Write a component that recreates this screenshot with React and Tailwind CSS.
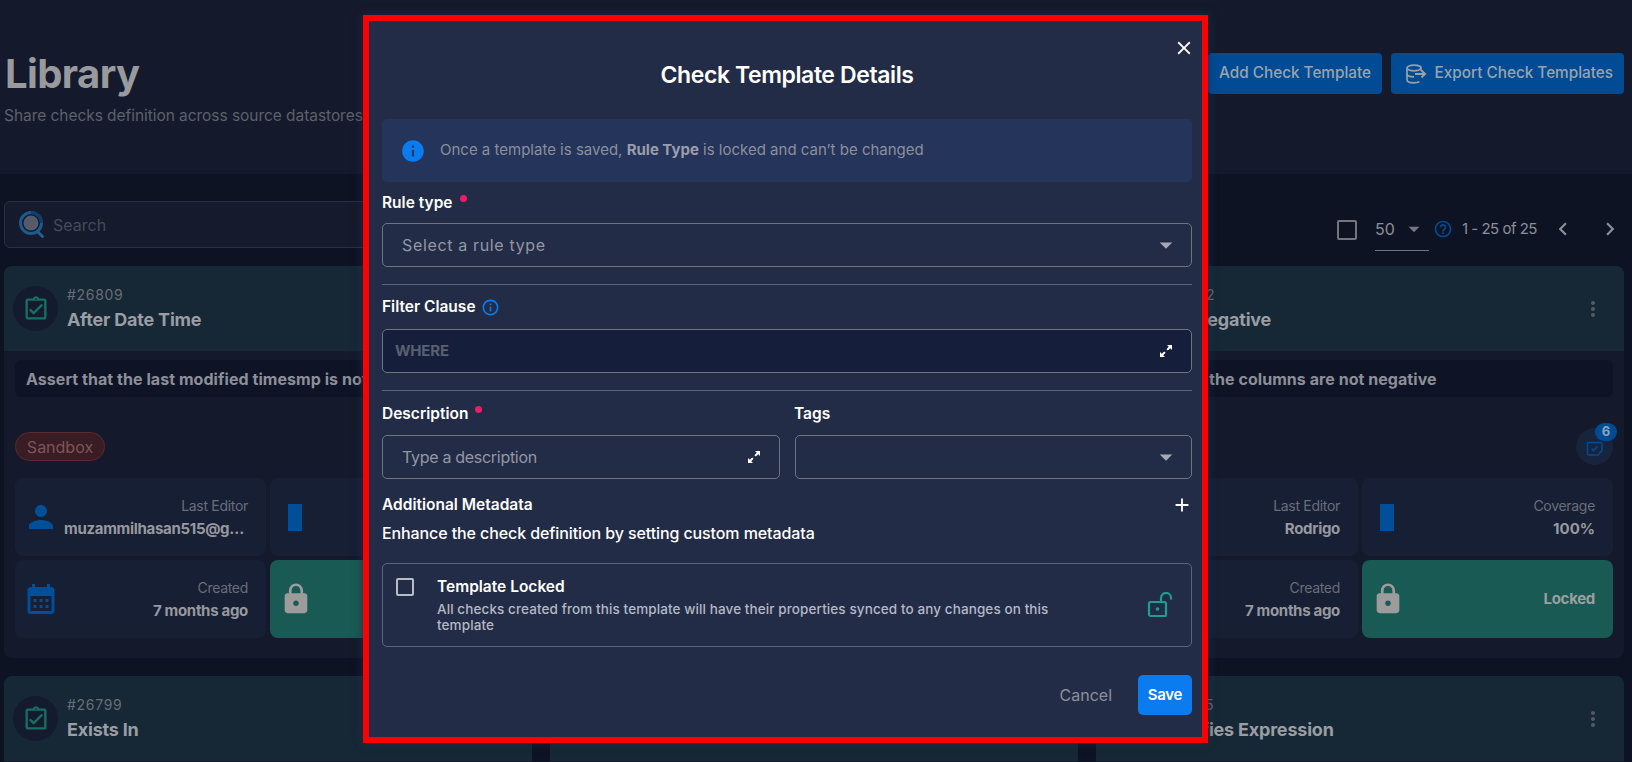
import React from "react";
import {
  MdInfo, MdInfoOutline, MdClose, MdAdd, MdArrowDropDown, MdPerson, MdCalendarMonth, MdLock,
  MdChevronLeft, MdChevronRight, MdMoreVert, MdHelpOutline, MdOutlineAssignmentTurnedIn,
} from "react-icons/md";

const Expand = () => (
  <svg width="14" height="14" viewBox="0 0 14 14" fill="#fff">
    <path d="M8 1h5v5l-1.8-1.8-2.4 2.4-1.4-1.4 2.4-2.4z" />
    <path d="M6 13H1V8l1.8 1.8 2.4-2.4 1.4 1.4-2.4 2.4z" />
  </svg>
);

const Unlock = () => (
  <svg width="26" height="26" viewBox="0 0 26 26" fill="none" stroke="#1f9d8e" strokeWidth="2.2">
    <rect x="2" y="10" width="17" height="14" rx="1.5" />
    <circle cx="10.5" cy="17" r="1.8" fill="#1f9d8e" stroke="none" />
    <path d="M14 10V6a5 5 0 0 1 10 0v1.5" />
  </svg>
);

const ExportIcon = () => (
  <svg width="22" height="20" viewBox="0 0 22 20" fill="none" stroke="#9a9fa8" strokeWidth="1.7">
    <ellipse cx="9" cy="4" rx="7" ry="2.8" />
    <path d="M2 4v12c0 1.6 3.1 2.8 7 2.8 2.2 0 4.2-.4 5.500-1M16 4v3" />
    <path d="M2 10c0 1.600 3.100 2.800 7 2.800" />
    <path d="M10 10h10M16.500 6.500 20 10l-3.500 3.500" strokeWidth="2" />
  </svg>
);

const SearchIcon = () => (
  <svg width="26" height="28" viewBox="0 0 26 28" fill="none">
    <circle cx="12" cy="12" r="10.500" stroke="#1b5a8c" strokeWidth="3" />
    <path d="M12 1.500a10.500 10.500 0 0 1 10.500 10.500" stroke="#0d3f6e" strokeWidth="3" />
    <circle cx="12" cy="12" r="7.500" fill="#555b6b" />
    <path d="M19 21l4.500 4.500" stroke="#245f8c" strokeWidth="3" strokeLinecap="round" />
  </svg>
);

const TaskIcon = () => (
  <svg width="18" height="18" viewBox="0 0 18 18" fill="none" stroke="#004b93" strokeWidth="1.6">
    <path d="M3 4.500h11.500a1.500 1.500 0 0 1 1.500 1.500v6.500L12 17H3a1.500 1.500 0 0 1-1.500-1.500V6A1.500 1.500 0 0 1 3 4.500z" />
    <path d="M5.500 10.500l2 2 4-4" />
  </svg>
);

function Stat({ icon, label, value }) {
  return (
    <div className="h-[78px] rounded-lg bg-[#171f35] flex items-center justify-between pl-[8px] pr-[18px] min-w-0">
      <div className="shrink-0 flex items-center">{icon}</div>
      <div className="text-right min-w-0 ml-[4px]">
        <div className="text-[14px] leading-[20px] text-[#696e78] tracking-[-0.3px]">{label}</div>
        <div className="text-[15px] leading-[20px] mt-[3px] font-bold text-[#98999e] truncate max-w-[184px] tracking-[-0.3px]">{value}</div>
      </div>
    </div>
  );
}

function Card({ id, title, desc, tag, badge, editor }) {
  return (
    <div className="rounded-lg overflow-hidden bg-[#141a2c] h-[392px]">
      <div className="h-[85px] bg-[#162835] flex items-center pl-[9px] pr-[19px]">
        <div className="w-[45px] h-[45px] rounded-full bg-[#141b2e] flex items-center justify-center shrink-0">
          <MdOutlineAssignmentTurnedIn size={28} color="#167060" />
        </div>
        <div className="ml-[9px] flex-1 min-w-0">
          <div className="text-[14px] leading-[20px] h-[20px] text-[#686d75] tracking-[0.7px]">{id}</div>
          <div className="text-[18px] leading-[26px] h-[26px] mt-[2px] font-bold text-[#9a9da3] tracking-[-0.2px]">{title}</div>
        </div>
        <MdMoreVert size={24} color="#565a5f" />
      </div>
      <div className="px-[11px]">
        <div className="mt-[9px] h-[37px] rounded-md bg-[#0e1426] px-[11px] flex items-center text-[16px] font-bold text-[#8c8f97] whitespace-nowrap overflow-hidden tracking-[0.05px]">
          {desc}
        </div>
        <div className="relative mt-[35px] h-[29px] flex items-center">
          {tag && (
            <span className="h-[29px] w-[90px] rounded-full bg-[#3a1c24] border border-[#5a2a2f] text-[#7d5558] text-[16px] flex items-center justify-center">
              {tag}
            </span>
          )}
          {badge && (
            <div className="absolute right-[0px] top-[-4px] w-[37px] h-[37px] rounded-full bg-[#18233c] flex items-center justify-center">
              <TaskIcon />
              <span className="absolute right-[-4px] top-[-5px] w-[22px] h-[18px] rounded-full bg-[#004b93] text-[#8aa3bd] text-[13px] font-bold flex items-center justify-center">
                {badge}
              </span>
            </div>
          )}
        </div>
        <div className="mt-[17px] grid grid-cols-2 gap-[4px]">
          <Stat icon={<MdPerson size={36} color="#004f98" />} label="Last Editor" value={editor} />
          <div className="h-[78px] rounded-lg bg-[#171f35] flex items-center justify-between pl-[18px] pr-[18px]">
            <div className="w-[14px] h-[27px] bg-[#004f98]" />
            <div className="text-right">
              <div className="text-[14px] leading-[20px] text-[#696e78] tracking-[-0.3px]">Coverage</div>
              <div className="text-[15px] leading-[20px] mt-[3px] font-bold text-[#98999e]">100%</div>
            </div>
          </div>
          <Stat icon={<MdCalendarMonth size={36} color="#004f98" />} label="Created" value="7 months ago" />
          <div className="h-[78px] rounded-lg bg-[#195a54] flex items-center justify-between pl-[9px] pr-[18px]">
            <MdLock size={34} color="#9c9c9c" />
            <div className="text-[15px] font-bold text-[#9c9f9f] tracking-[-0.3px]">Locked</div>
          </div>
        </div>
      </div>
    </div>
  );
}

const Label = ({ children, dot, className = "" }) => (
  <div className={`h-[20px] leading-[20px] text-[15.5px] font-semibold text-white flex items-start ${className}`}>
    {children}
    {dot && <span className="ml-[7px] mt-[2px] w-[7px] h-[7px] rounded-full bg-[#e91e63]" />}
  </div>
);

const Field = ({ children, className = "" }) => (
  <div className={`h-[44px] rounded-[5px] border border-[#6f7480] flex items-center justify-between ${className}`}>
    {children}
  </div>
);

function Modal() {
  return (
    <div className="absolute left-[363px] top-[15px] w-[845px] h-[728px] border-[6px] border-[#ff0000] bg-[#232c47] pl-[13px] pr-[10px] shadow-[0_0_8px_rgba(35,44,71,0.8)]">
      <button className="absolute right-[7px] top-[16px] text-white">
        <MdClose size={22} />
      </button>
      <h2 className="mt-[39px] text-center text-[23px] leading-[30px] font-semibold text-white tracking-[-0.4px]">
        Check Template Details
      </h2>
      <div className="mt-[29px] h-[63px] rounded-[5px] bg-[#24345a] flex items-center pl-[18px] text-[15px] text-[#8b909c]">
        <MdInfo size={26} color="#0a7cf0" className="shrink-0" />
        <span className="ml-[14px]">
          Once a template is saved, <b className="font-bold text-[#9a9eaa]">Rule Type</b> is locked and can’t be changed
        </span>
      </div>
      <Label dot className="mt-[11px]">Rule type</Label>
      <Field className="mt-[10px] pl-[19px] pr-[10px]">
        <span className="text-[16px] text-[#9297a3] tracking-[0.65px]">Select a rule type</span>
        <MdArrowDropDown size={30} color="#a6a9b3" />
      </Field>
      <div className="mt-[17px] h-px bg-[#5f6472]" />
      <Label className="mt-[12px]">
        Filter Clause
        <MdInfoOutline size={19} color="#0a7cf0" className="ml-[5px] mt-[1px]" />
      </Label>
      <Field className="mt-[12px] bg-[#151e3a] pl-[12px] pr-[18px]">
        <span className="text-[15px] font-bold text-[#59606f] tracking-[-0.2px]">WHERE</span>
        <Expand />
      </Field>
      <div className="mt-[17px] h-px bg-[#5f6472]" />
      <div className="mt-[13px] grid grid-cols-[398px_1fr] gap-x-[15px]">
        <Label dot>Description</Label>
        <Label className="ml-[-1px]">Tags</Label>
        <Field className="mt-[11px] pl-[19px] pr-[18px]">
          <span className="text-[16px] text-[#9297a3] tracking-[-0.3px]">Type a description</span>
          <Expand />
        </Field>
        <Field className="mt-[11px] justify-end pr-[10px]">
          <MdArrowDropDown size={30} color="#a6a9b3" />
        </Field>
      </div>
      <div className="mt-[16px] flex items-center justify-between h-[20px]">
        <Label>Additional Metadata</Label>
        <MdAdd size={22} color="#fff" className="mr-[-1px]" />
      </div>
      <div className="mt-[8px] h-[20px] leading-[20px] text-[16px] font-medium text-white tracking-[-0.1px]">
        Enhance the check definition by setting custom metadata
      </div>
      <div className="mt-[20px] h-[84px] rounded-[5px] border border-[#5b6478] flex items-start pl-[13px] pr-[18px]">
        <div className="mt-[14px] w-[18px] h-[18px] rounded-[2px] border-2 border-[#b9bcc6] shrink-0" />
        <div className="ml-[23px] mt-[13px] flex-1">
          <div className="text-[15.5px] leading-[20px] font-semibold text-white">Template Locked</div>
          <div className="mt-[4px] text-[13.5px] leading-[16px] text-[#b4b9c4] w-[620px] font-medium tracking-[0.1px]">
            All checks created from this template will have their properties synced to any changes on this template
          </div>
        </div>
        <div className="mt-[28px] shrink-0">
          <Unlock />
        </div>
      </div>
      <div className="mt-[28px] flex items-center justify-end">
        <span className="text-[16px] text-[#8b8f9b] mr-[26px]">Cancel</span>
        <button className="w-[54px] h-[40px] rounded-[5px] bg-[#0a7cf0] text-white text-[15px] font-semibold tracking-[-0.3px]">Save</button>
      </div>
    </div>
  );
}

export default function App() {
  return (
    <div className="relative h-[762px] w-[1632px] overflow-hidden bg-[#0e1324] font-[Inter,sans-serif]">
      <header className="h-[174px] bg-[#141a2b] flex justify-between pl-[4px] pr-[8px]">
        <div className="pt-[48px]">
          <h1 className="text-[40px] leading-[52px] font-bold text-[#999a9e] ml-[1px] tracking-[-0.6px]">Library</h1>
          <p className="mt-[6px] text-[15.5px] leading-[20px] text-[#5c616c] tracking-[-0.05px]">Share checks definition across source datastores</p>
        </div>
        <div className="pt-[53px] flex items-start gap-[9px]">
          <button className="h-[41px] px-[11px] rounded bg-[#004b93] text-[#9aa3af] text-[15.3px] font-medium">Add Check Template</button>
          <button className="h-[41px] w-[233px] pl-[14px] pr-[11px] rounded bg-[#004b93] text-[#9aa3af] text-[15.3px] font-medium flex items-center justify-between">
            <ExportIcon />
            <span>Export Check Templates</span>
          </button>
        </div>
      </header>
      <div className="h-[74px] pl-[4px] pr-[8px] pt-[27px] flex justify-between items-start">
        <div className="h-[47px] w-[800px] rounded-md border border-[#2a3040] bg-[#151a2c] flex items-center pl-[14px]">
          <SearchIcon />
          <span className="ml-[8px] text-[16px] text-[#454b58]">Search</span>
        </div>
        <div className="flex items-center pt-[8px] pr-[1px] text-[#8b8f98]">
          <div className="w-[20px] h-[20px] border-2 border-[#74767c] rounded-[2px]" />
          <div className="ml-[18px] w-[54px] h-[42px] border-b border-[#74767c] flex items-start justify-between pt-[10px]">
            <span className="text-[16px] leading-[20px]">50</span>
            <MdArrowDropDown size={26} color="#74767c" className="mt-[-3px] mr-[2px]" />
          </div>
          <MdHelpOutline size={20} color="#004b93" className="ml-[4px] mt-[-2px]" />
          <span className="ml-[9px] text-[15px] tracking-[-0.5px] mt-[-2px]">1 - 25 of 25</span>
          <MdChevronLeft size={26} className="ml-[13px] mt-[-2px]" />
          <MdChevronRight size={26} className="ml-[21px] mt-[-2px]" />
        </div>
      </div>
      <div className="mt-[18px] pl-[4px] pr-[8px] grid grid-cols-3 gap-[18px]">
        <Card id="#26809" title="After Date Time" desc="Assert that the last modified timesmp is not" tag="Sandbox" editor="muzammilhasan515@gmail.com" />
        <Card editor="" />
        <Card id="#26802" title="Not Negative" desc="Assert that the columns are not negative" badge="6" editor="Rodrigo" />
        <Card id="#26799" title="Exists In" editor="" />
        <Card editor="" />
        <Card id="#26795" title="Satisfies Expression" editor="" />
      </div>
      <Modal />
    </div>
  );
}
